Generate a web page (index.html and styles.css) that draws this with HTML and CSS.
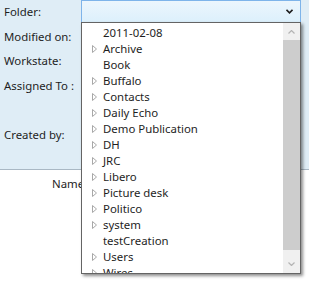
FILE: index.html
```html
<!DOCTYPE html>
<html>
<head>
<meta charset="utf-8">
<link rel="stylesheet" href="styles.css">
</head>
<body>
<div class="panel">
  <div class="row row-folder">
    <span class="label">Folder:</span>
    <div class="combo">
      <svg class="combo-chev" width="7" height="5" viewBox="0 0 7 5"><polyline points="0.5,0.8 3.5,3.8 6.5,0.8" fill="none" stroke="#1e1e1e" stroke-width="1.6"/></svg>
    </div>
  </div>
  <div class="row r2"><span class="label">Modified on:</span></div>
  <div class="row r3"><span class="label">Workstate:</span></div>
  <div class="row r4"><span class="label">Assigned To :</span></div>
  <div class="row r5"><span class="label">Created by:</span></div>
</div>
<div class="header">
  <span class="col-name">Name</span>
</div>

<div class="dropdown">
  <ul class="list">
    <li><span class="tri none"></span>2011-02-08</li>
    <li><span class="tri"><svg width="5" height="8" viewBox="0 0 5 8"><polygon points="0.5,0.5 4.5,4 0.5,7.5" fill="#fff" stroke="#a8a8a8"/></svg></span>Archive</li>
    <li><span class="tri none"></span>Book</li>
    <li><span class="tri"><svg width="5" height="8" viewBox="0 0 5 8"><polygon points="0.5,0.5 4.5,4 0.5,7.5" fill="#fff" stroke="#a8a8a8"/></svg></span>Buffalo</li>
    <li><span class="tri"><svg width="5" height="8" viewBox="0 0 5 8"><polygon points="0.5,0.5 4.5,4 0.5,7.5" fill="#fff" stroke="#a8a8a8"/></svg></span>Contacts</li>
    <li><span class="tri"><svg width="5" height="8" viewBox="0 0 5 8"><polygon points="0.5,0.5 4.5,4 0.5,7.5" fill="#fff" stroke="#a8a8a8"/></svg></span>Daily Echo</li>
    <li><span class="tri"><svg width="5" height="8" viewBox="0 0 5 8"><polygon points="0.5,0.5 4.5,4 0.5,7.5" fill="#fff" stroke="#a8a8a8"/></svg></span>Demo Publication</li>
    <li><span class="tri"><svg width="5" height="8" viewBox="0 0 5 8"><polygon points="0.5,0.5 4.5,4 0.5,7.5" fill="#fff" stroke="#a8a8a8"/></svg></span>DH</li>
    <li><span class="tri"><svg width="5" height="8" viewBox="0 0 5 8"><polygon points="0.5,0.5 4.5,4 0.5,7.5" fill="#fff" stroke="#a8a8a8"/></svg></span>JRC</li>
    <li><span class="tri"><svg width="5" height="8" viewBox="0 0 5 8"><polygon points="0.5,0.5 4.5,4 0.5,7.5" fill="#fff" stroke="#a8a8a8"/></svg></span>Libero</li>
    <li><span class="tri"><svg width="5" height="8" viewBox="0 0 5 8"><polygon points="0.5,0.5 4.5,4 0.5,7.5" fill="#fff" stroke="#a8a8a8"/></svg></span>Picture desk</li>
    <li><span class="tri"><svg width="5" height="8" viewBox="0 0 5 8"><polygon points="0.5,0.5 4.5,4 0.5,7.5" fill="#fff" stroke="#a8a8a8"/></svg></span>Politico</li>
    <li><span class="tri"><svg width="5" height="8" viewBox="0 0 5 8"><polygon points="0.5,0.5 4.5,4 0.5,7.5" fill="#fff" stroke="#a8a8a8"/></svg></span>system</li>
    <li><span class="tri none"></span>testCreation</li>
    <li><span class="tri"><svg width="5" height="8" viewBox="0 0 5 8"><polygon points="0.5,0.5 4.5,4 0.5,7.5" fill="#fff" stroke="#a8a8a8"/></svg></span>Users</li>
    <li><span class="tri"><svg width="5" height="8" viewBox="0 0 5 8"><polygon points="0.5,0.5 4.5,4 0.5,7.5" fill="#fff" stroke="#a8a8a8"/></svg></span>Wires</li>
  </ul>
  <div class="scrollbar">
    <div class="sb-btn sb-up"><svg width="7" height="4" viewBox="0 0 7 4"><polyline points="0.5,3.5 3.5,0.5 6.5,3.5" fill="none" stroke="#b4b4b4" stroke-width="1.2"/></svg></div>
    <div class="sb-thumb"></div>
    <div class="sb-btn sb-down"><svg width="7" height="4" viewBox="0 0 7 4"><polyline points="0.5,0.5 3.5,3.5 6.5,0.5" fill="none" stroke="#b4b4b4" stroke-width="1.2"/></svg></div>
  </div>
</div>
</body>
</html>
```

FILE: styles.css
```css
html, body {
  margin: 0;
  padding: 0;
  background: #ffffff;
  width: 309px;
  height: 281px;
  overflow: hidden;
  font-family: "Segoe UI", "Noto Sans", sans-serif;
  font-size: 11.4px;
  color: #1e1e1e;
}

.panel {
  position: relative;
  height: 169px;
  background: #dfedf6;
  border-bottom: 1px solid #a9b8c4;
  display: flex;
  flex-direction: column;
}

.row {
  display: flex;
  align-items: center;
  padding-left: 4px;
}

.label {
  width: 77px;
  flex: none;
  line-height: 16px;
}

.row-folder { height: 25px; align-items: flex-start; }
.row-folder .label { padding-top: 4px; }
.r2 { height: 24px; }
.r3 { height: 24px; }
.r4 { height: 25px; }
.r5 { height: 50px; align-items: flex-end; padding-bottom: 5px; box-sizing: border-box; }

.combo {
  width: 218px;
  height: 21px;
  border: 1px solid #7eb4ea;
  background: linear-gradient(#ecf6fd, #dcf0fc);
  display: flex;
  align-items: center;
  justify-content: flex-end;
  box-sizing: content-box;
}

.combo-chev {
  margin-right: 7px;
  display: block;
}

.header {
  height: 26px;
  background: #ffffff;
  display: flex;
  align-items: center;
}

.col-name {
  padding-left: 52px;
}

.dropdown {
  position: absolute;
  left: 81px;
  top: 22px;
  width: 218px;
  height: 250px;
  border: 1px solid #646464;
  background: #ffffff;
  box-shadow: 2px 2px 3px rgba(0, 0, 0, 0.45);
  display: flex;
  overflow: hidden;
}

.list {
  list-style: none;
  margin: 0;
  padding: 2px 0 0 0;
  flex: 1;
}

.list li {
  height: 16px;
  line-height: 16px;
  display: flex;
  align-items: center;
  white-space: nowrap;
  padding-left: 10px;
}

.tri {
  width: 11px;
  flex: none;
  display: flex;
  align-items: center;
}

.tri svg { display: block; }

.scrollbar {
  width: 17px;
  flex: none;
  display: flex;
  flex-direction: column;
  background: #f0f0f0;
}

.sb-btn {
  height: 17px;
  display: flex;
  align-items: center;
  justify-content: center;
  background: #f0f0f0;
}

.sb-up { height: 17px; }
.sb-down { height: 23px; align-items: flex-end; padding-bottom: 7px; box-sizing: border-box; }

.sb-thumb {
  flex: 1;
  background: #cdcdcd;
}
```
